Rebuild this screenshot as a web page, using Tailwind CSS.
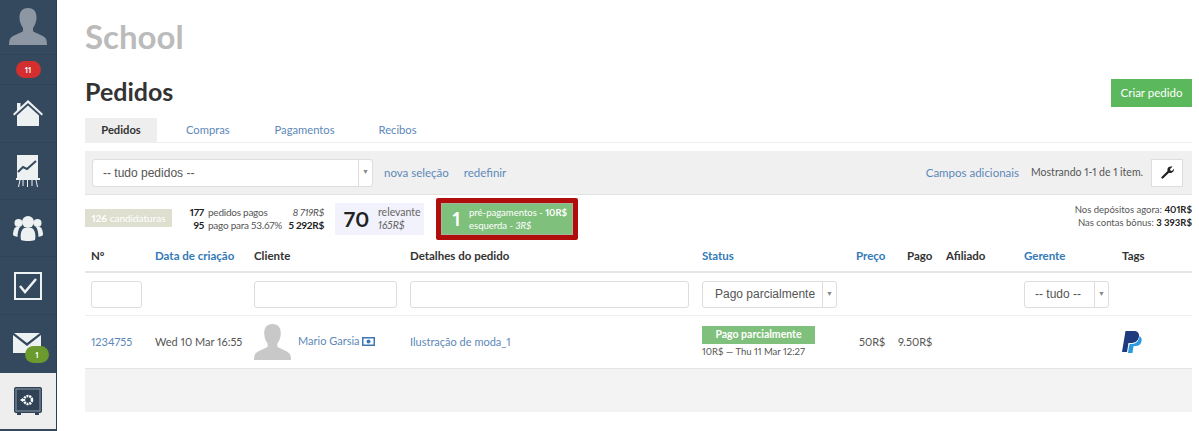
<!DOCTYPE html>
<html lang="en">
<head>
    <meta charset="UTF-8">
    <title>Pedidos</title>
    <script src="https://cdn.jsdelivr.net/npm/@tailwindcss/browser@4"></script>
</head>
<body class="bg-white font-['Lato',sans-serif] text-[#333] overflow-hidden proportional-nums">
<div class="flex h-[431px] w-[1199px] overflow-hidden">
    <!-- sidebar -->
    <nav class="w-[57px] h-full shrink-0 bg-[#34495e] border-r border-[#2c3e50] flex flex-col">
        <div class="h-[55px] flex items-center justify-center border-b border-[#2f4256]">
            <svg width="38" height="38" viewBox="0 0 38 38" fill="#8d97a3"><path d="M19 0c6 0 8.500 4 8.500 9.500 0 4-1.500 8-3.500 10.500v3c1 2 11 4 13 8 .7 1.500 1 4 1 6H0c0-2 .3-4.500 1-6 2-4 12-6 13-8v-3c-2-2.500-3.500-6.500-3.500-10.500C10.500 4 13 0 19 0z"/></svg>
        </div>
        <div class="h-[30px] flex items-center justify-center border-b border-[#2f4256]">
            <span class="w-[25px] h-[17px] rounded-full bg-[#d32f2f] text-white text-[8px] font-bold flex items-center justify-center">11</span>
        </div>
        <div class="h-[58px] flex items-center justify-center border-b border-[#2f4256]">
            <svg width="30" height="28" viewBox="0 0 30 28" fill="#eef1f2"><path d="M15 0 30 14l-1.300 1.500L15 3 1.300 15.500 0 14l4-3.800V3h3.500v4z"/><path d="M15 5.500 26 15.500V26H4V15.500z"/></svg>
        </div>
        <div class="h-[57px] flex items-center justify-center border-b border-[#2f4256]">
            <svg width="24" height="32" viewBox="0 0 24 32" fill="none"><rect x="1" y="0" width="21" height="23" fill="#eef1f2"/><rect x="0" y="23" width="24" height="2" fill="#eef1f2"/><path d="M2 17l5-5 4 2 9-8" stroke="#34495e" stroke-width="2"/><path d="M4 25l-1.500 7M11.500 25v7M20 25l1.500 7M7 25v6M16 25v6" stroke="#eef1f2" stroke-width="1"/></svg>
        </div>
        <div class="h-[57px] flex items-center justify-center border-b border-[#2f4256]">
            <svg width="30" height="26" viewBox="0 0 30 26" fill="#eef1f2"><circle cx="15" cy="7" r="6"/><circle cx="5.500" cy="8" r="4"/><circle cx="24.500" cy="8" r="4"/><path d="M8 25c-1-5 0-10 3-12h8c3 2 4 7 3 12-4 1.300-10 1.300-14 0z"/><path d="M0 20c0-4 1-7 3-8h4c-1.500 2-2.500 6-2.500 10C3 21.500 1 21 0 20zM30 20c0-4-1-7-3-8h-4c1.500 2 2.500 6 2.500 10 1.500-.5 3.500-1 4.500-2z"/></svg>
        </div>
        <div class="h-[58px] flex items-center justify-center border-b border-[#2f4256]">
            <svg width="28" height="28" viewBox="0 0 28 28" fill="none"><rect x="1" y="1" width="26" height="26" stroke="#eef1f2" stroke-width="2"/><path d="M6 14l5 6 11-13" stroke="#eef1f2" stroke-width="2.500"/></svg>
        </div>
        <div class="h-[58px] relative flex items-center justify-center">
            <svg class="relative top-[-1px] left-[-1px]" width="28" height="20" viewBox="0 0 28 20"><path d="M1 0h26L14 10z" fill="#eef1f2"/><path d="M0 2l14 11L28 2v18H0z" fill="#eef1f2"/></svg>
            <span class="absolute left-[25px] top-[31px] w-[24px] h-[17px] rounded-full bg-[#6b9a2e] text-white text-[8px] font-bold flex items-center justify-center">1</span>
        </div>
        <div class="h-[56px] bg-[#eeeeee] flex items-center justify-center">
            <svg width="28" height="28" viewBox="0 0 28 28"><rect x="0" y="0" width="28" height="26" rx="2" fill="#2f4256"/><rect x="2" y="2" width="24" height="22" fill="none" stroke="#8d9aa8" stroke-width="1"/><circle cx="14" cy="13" r="4" fill="none" stroke="#fff" stroke-width="2.500" stroke-dasharray="2 0.800"/><path d="M6 13l3-2v4z" fill="#fff"/><rect x="3" y="26" width="4" height="2" fill="#2f4256"/><rect x="21" y="26" width="4" height="2" fill="#2f4256"/></svg>
        </div>
        <div class="flex-1"></div>
    </nav>

    <main class="w-[1107px] ml-[28px] shrink-0">
        <h2 class="h-[79px] pt-[18px] text-[33px] leading-[36px] font-bold text-[#bbbbbb]">School</h2>

        <div class="flex justify-between h-[39px]">
            <h1 class="text-[25px] leading-[25px] font-bold text-[#333]">Pedidos</h1>
            <a class="w-[81px] h-[28px] bg-[#5cb85c] text-white text-[11.500px] flex items-center justify-center">Criar pedido</a>
        </div>

        <!-- tabs -->
        <div class="flex h-[25px] border-b border-[#eeeeee] text-[11.200px] text-[#5d88b8]">
            <a class="w-[72px] h-[24px] bg-[#eeeeee] text-[#333] font-bold flex items-center justify-center">Pedidos</a>
            <a class="ml-[29px] leading-[24px]">Compras</a>
            <a class="ml-[45px] leading-[24px]">Pagamentos</a>
            <a class="ml-[44px] leading-[24px]">Recibos</a>
        </div>

        <!-- filter bar -->
        <div class="mt-[8px] h-[44px] bg-[#f0f0f0] border-b border-[#e2e2e2] flex items-center pl-[7px] pr-[9px] text-[11.500px]">
            <div class="w-[281px] h-[28px] bg-white border border-[#dddddd] rounded-[3px] flex items-center text-[#555] text-[12px] font-['Liberation_Sans',sans-serif]">
                <span class="flex-1 pl-[10px]">-- tudo pedidos --</span>
                <span class="w-[14px] h-full border-l border-[#dddddd] flex items-center justify-center text-[7px] text-[#888]">▼</span>
            </div>
            <a class="ml-[11px] text-[#5d88b8]">nova seleção</a>
            <a class="ml-[15px] text-[#5d88b8]">redefinir</a>
            <a class="ml-auto text-[#5d88b8]">Campos adicionais</a>
            <span class="ml-[12px] text-[#555] text-[10.500px] whitespace-nowrap">Mostrando 1-1 de 1 item.</span>
            <button class="ml-[8px] w-[32px] h-[28px] bg-white border border-[#dddddd] flex items-center justify-center">
                <svg width="13" height="13" viewBox="0 0 13 13" fill="#222"><path d="M0.500 11 6.500 5C6 3 7 0.500 10 0.500c.6 0 1.200.1 1.500.3L9 3l.4 1.600L11 5l2-2.300c.3 2.800-2 4.800-5 4L2 12.500c-.8.5-2.400-.6-1.500-1.500z"/></svg>
            </button>
        </div>

        <!-- stats -->
        <div class="h-[46px] flex items-start text-[10.500px]">
            <div class="mt-[14px] w-[87px] h-[18px] bg-[#dedfcf] text-white flex items-center justify-center text-[10px] whitespace-nowrap"><b>126</b>&nbsp;candidaturas</div>
            <div class="ml-[15px] mt-[11px] w-[137px] grid grid-cols-[17px_1fr_auto] gap-x-[4px] leading-[13px] text-[10px] tracking-[-0.25px] text-[#555] whitespace-nowrap">
                <b class="text-right text-[#222]">177</b><span>pedidos pagos</span><i class="text-right">8 719R$</i>
                <b class="text-right text-[#222]">95</b><span>pago para 53.67%</span><b class="text-right text-[#222]">5 292R$</b>
            </div>
            <div class="ml-[11px] mt-[8px] w-[89px] h-[32px] bg-[#f1f2fb] flex items-center">
                <span class="w-[43px] text-center text-[21px] font-bold text-[#222]">70</span>
                <div class="leading-[13px] text-[#666]"><div>relevante</div><i>165R$</i></div>
            </div>
            <div class="ml-[12px] mt-[3px] w-[142px] h-[42px] bg-[#b00d0d] rounded-[2px] p-[5px]">
                <div class="h-full bg-[#7fc07c] border border-[#a5b5a0] flex items-center text-white">
                    <span class="w-[27px] text-center text-[19px] font-bold pl-[2px]">1</span>
                    <div class="leading-[13px] text-[9.500px] whitespace-nowrap"><div>pré-pagamentos - <b>10R$</b></div><div>esquerda - <i>3R$</i></div></div>
                </div>
            </div>
            <div class="ml-auto mt-[8px] text-right text-[9.500px] leading-[13px] text-[#555] whitespace-nowrap">
                <div>Nos depósitos agora: <b class="text-[#222]">401R$</b></div>
                <div>Nas contas bônus: <b class="text-[#222]">3 393R$</b></div>
            </div>
        </div>

        <!-- table -->
        <div class="grid grid-cols-[64px_99px_156px_292px_154px_51px_39px_78px_98px_76px] h-[32px] items-center border-b-2 border-[#e5e5e5] text-[11.500px] font-bold text-[#333] *:pl-[6px] whitespace-nowrap">
            <div>Nº</div>
            <a class="text-[#337ab7]">Data de criação</a>
            <div>Cliente</div>
            <div>Detalhes do pedido</div>
            <a class="text-[#337ab7]">Status</a>
            <a class="text-[#337ab7]">Preço</a>
            <div>Pago</div>
            <div>Afiliado</div>
            <a class="text-[#337ab7]">Gerente</a>
            <div>Tags</div>
        </div>
        <div class="grid grid-cols-[64px_99px_156px_292px_154px_51px_39px_78px_98px_76px] h-[43px] items-center border-b border-[#eeeeee] text-[12px] text-[#555] font-['Liberation_Sans',sans-serif] *:ml-[6px]">
            <div class="w-[51px] h-[27px] bg-white border border-[#dddddd] rounded-[3px]"></div>
            <div></div>
            <div class="w-[143px] h-[27px] bg-white border border-[#dddddd] rounded-[3px]"></div>
            <div class="w-[279px] h-[27px] bg-white border border-[#dddddd] rounded-[3px]"></div>
            <div class="w-[135px] h-[27px] bg-white border border-[#dddddd] rounded-[3px] flex items-center">
                <span class="flex-1 pl-[12px] whitespace-nowrap">Pago parcialmente</span>
                <span class="w-[14px] h-full border-l border-[#dddddd] flex items-center justify-center text-[7px] text-[#888]">▼</span>
            </div>
            <div></div>
            <div></div>
            <div></div>
            <div class="w-[85px] h-[27px] bg-white border border-[#dddddd] rounded-[3px] flex items-center">
                <span class="flex-1 pl-[10px]">-- tudo --</span>
                <span class="w-[14px] h-full border-l border-[#dddddd] flex items-center justify-center text-[7px] text-[#888]">▼</span>
            </div>
            <div></div>
        </div>
        <div class="grid grid-cols-[64px_99px_156px_292px_154px_51px_39px_78px_98px_76px] h-[53px] items-center border-b border-[#e5e5e5] text-[11px] text-[#555] *:pl-[6px] whitespace-nowrap">
            <a class="text-[#5d88b8]">1234755</a>
            <div>Wed 10 Mar 16:55</div>
            <div class="flex items-center">
                <svg class="shrink-0" width="37" height="37" viewBox="0 0 38 38" fill="#c8c8c8"><path d="M19 0c6 0 8.500 4 8.500 9.500 0 4-1.500 8-3.500 10.500v3c1 2 11 4 13 8 .7 1.500 1 4 1 6H0c0-2 .3-4.500 1-6 2-4 12-6 13-8v-3c-2-2.500-3.500-6.500-3.500-10.500C10.500 4 13 0 19 0z"/></svg>
                <a class="ml-[7px] text-[#5d88b8] relative top-[-1px]">Mario Garsia</a>
                <svg class="ml-[2px] shrink-0 relative top-[-1px]" width="13" height="9" viewBox="0 0 13 9"><rect width="13" height="9" fill="#3d78b5"/><rect x="1.500" y="1.500" width="10" height="6" fill="#fff"/><circle cx="6.500" cy="4.500" r="2" fill="#3d78b5"/></svg>
            </div>
            <a class="text-[#5d88b8]">Ilustração de moda_1</a>
            <div>
                <div class="w-[113px] h-[18px] bg-[#7fc07c] text-white text-[10.500px] font-bold flex items-center justify-center">Pago parcialmente</div>
                <div class="text-[9.500px] leading-[14px] mt-[1px]">10R$ — Thu 11 Mar 12:27</div>
            </div>
            <div class="ml-[3px]">50R$</div>
            <div class="-ml-[9px]">9.50R$</div>
            <div></div>
            <div></div>
            <div>
                <svg width="20" height="22" viewBox="0 0 20 22"><path d="M3.500 0h8c4 0 6 2 5.500 5.500C16.300 10 13 12 9 12H6.500L5 21H0z" fill="#1f3a7d"/><path d="M17.500 5c2 1 2.500 3 2 5.500-.7 3-3 4.500-6 4.500h-2l-1 7H6l1-7 1-2h2c4 0 7-3 7.500-8z" fill="#2b9be0"/></svg>
            </div>
        </div>
        <div class="h-[43px] bg-[#f3f3f3]"></div>
    </main>
</div>
</body>
</html>
